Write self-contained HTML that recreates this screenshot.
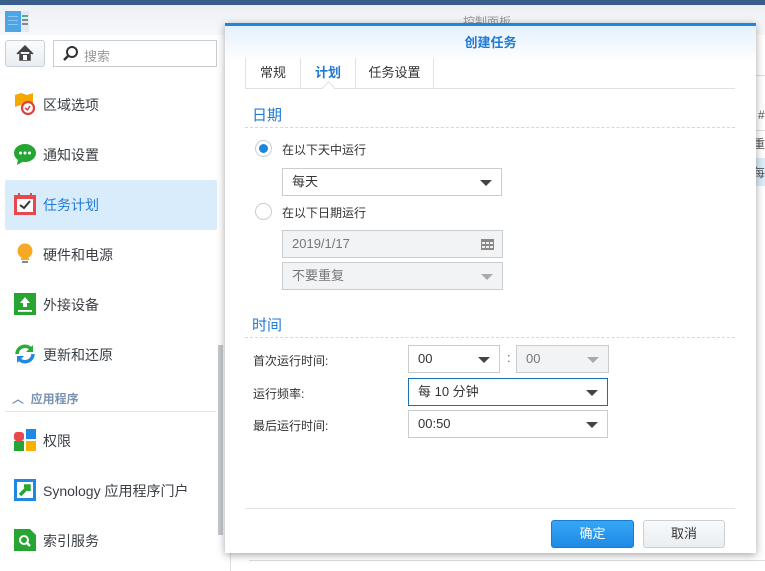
<!DOCTYPE html>
<html><head><meta charset="utf-8"><style>
*{box-sizing:border-box;margin:0;padding:0}
body{width:765px;height:571px;overflow:hidden;background:#fff;font-family:"Liberation Sans","Noto Sans CJK SC",sans-serif;font-size:13px;color:#333;position:relative}
.abs{position:absolute}
.topbar{left:0;top:0;width:765px;height:5px;background:#3a5e8c}
.hdr{left:0;top:5px;width:765px;height:30px;background:linear-gradient(#eef1f4,#f6f8fa)}
.side{left:0;top:35px;width:230px;height:536px;background:#fff}
.item{position:absolute;left:5px;width:212px;height:50px;font-size:14px;color:#3a3f45}
.item .ic{position:absolute;left:9px;top:13px;width:22px;height:22px}
.item span{position:absolute;left:38px;top:15px}
.sel{background:#d9ecfb}
.sel span{color:#1f7ad6}
.dlg{left:225px;top:23px;width:531px;height:530px;background:#fff;box-shadow:0 2px 8px rgba(0,0,0,.35);border-top:3px solid #1a87de}
.title{left:0;top:0;width:531px;height:36px;background:linear-gradient(#e4f1fb,#fff);text-align:center;line-height:34px;color:#1f7ad6;font-size:13px;font-weight:bold}
.tab{position:absolute;top:32px;height:30px;line-height:30px;font-size:13px;color:#333;text-align:center}
.field{position:absolute;height:28px;border:1px solid #c8cdd2;background:#fff;font-size:13px;line-height:26px;padding-left:9px}
.dis{background:#f2f3f5;color:#777}
.arr{position:absolute;right:9px;top:11px;width:0;height:0;border-left:6px solid transparent;border-right:6px solid transparent;border-top:6px solid #444}
.dis .arr{border-top-color:#aaa}
.sec{position:absolute;left:27px;color:#1f7ad6;font-size:15px}
.dash{position:absolute;left:20px;width:490px;border-top:1px dashed #d5d8db}
.lbl{position:absolute;left:28px;font-size:12px;color:#333}
.clip{position:absolute;left:753px;width:12px;overflow:hidden;white-space:nowrap;color:#555;font-size:12px}
</style></head><body>
<div class="abs topbar"></div>
<div class="abs hdr"><div class="abs" style="left:463px;top:8px;color:#999;font-size:12px">控制面板</div></div>
<svg class="abs" style="left:5px;top:11px" width="24" height="22"><rect width="16" height="21" fill="#4ea5e6"/><rect x="16" width="8" height="21" fill="#e3e9ef"/><rect x="17" y="4" width="6" height="2" fill="#5a9"/><rect x="17" y="8" width="6" height="2" fill="#888"/><rect x="17" y="12" width="6" height="2" fill="#888"/><rect x="3" y="5" width="10" height="1" fill="#8cc8f4"/><rect x="3" y="9" width="10" height="1" fill="#8cc8f4"/><rect x="3" y="13" width="10" height="1" fill="#8cc8f4"/></svg>
<div class="abs side"></div>
<div class="abs" style="left:5px;top:40px;width:40px;height:27px;border:1px solid #c9d0d8;border-radius:3px;background:linear-gradient(#fafbfc,#e9edf1)">
<svg width="40" height="27" style="position:absolute;left:-1px;top:-1px"><path d="M12 14 L20 6 L28 14 M15 12 V20 H25 V12" fill="#444" stroke="#444" stroke-width="1.5"/><rect x="18" y="15" width="4" height="5" fill="#fff"/></svg></div>
<div class="abs" style="left:53px;top:40px;width:164px;height:27px;border:1px solid #c9ced3;background:#fff">
<svg width="20" height="20" style="position:absolute;left:7px;top:3px"><circle cx="11" cy="8" r="5" stroke="#333" stroke-width="2" fill="none"/><path d="M7.5 11.5 L3 16" stroke="#333" stroke-width="2.5"/></svg>
<span style="position:absolute;left:30px;top:5px;color:#999;font-size:13px">搜索</span></div>

<div class="item" style="top:80px"><svg class="ic" viewBox="0 0 22 22"><path d="M1 2 L7 0 L13 2 L19 0 V12 L13 14 L7 12 L1 14Z" fill="#f5a800"/><circle cx="14" cy="15" r="6" fill="#fff" stroke="#e04040" stroke-width="2.2"/><path d="M11 15 L13.5 17 L16 13" stroke="#e04040" stroke-width="1.5" fill="none"/></svg><span>区域选项</span></div>
<div class="item" style="top:130px"><svg class="ic" viewBox="0 0 22 22"><ellipse cx="11" cy="10" rx="11" ry="9" fill="#27a533"/><path d="M4 16 L3 22 L10 18Z" fill="#27a533"/><circle cx="6.5" cy="10" r="1.5" fill="#fff"/><circle cx="11" cy="10" r="1.5" fill="#fff"/><circle cx="15.5" cy="10" r="1.5" fill="#fff"/></svg><span>通知设置</span></div>
<div class="item sel" style="top:180px;border-radius:2px"><svg class="ic" viewBox="0 0 22 22"><rect x="0" y="2" width="22" height="20" fill="#e8474c"/><rect x="3" y="6" width="16" height="13" fill="#fff"/><rect x="4" y="0" width="2" height="4" fill="#e8474c"/><rect x="16" y="0" width="2" height="4" fill="#e8474c"/><path d="M6 12 L10 15 L16 8" stroke="#333" stroke-width="2" fill="none"/></svg><span>任务计划</span></div>
<div class="item" style="top:230px"><svg class="ic" viewBox="0 0 22 22"><circle cx="11" cy="8" r="7.5" fill="#f9a825"/><rect x="7" y="15" width="8" height="2" fill="#f9a825"/><rect x="8" y="18" width="6" height="2" fill="#888"/></svg><span>硬件和电源</span></div>
<div class="item" style="top:280px"><svg class="ic" viewBox="0 0 22 22"><rect width="22" height="22" fill="#27a533"/><path d="M11 4 L16 10 H13 V14 H9 V10 H6Z" fill="#fff"/><rect x="4" y="17" width="14" height="1.8" fill="#fff"/></svg><span>外接设备</span></div>
<div class="item" style="top:330px"><svg class="ic" viewBox="0 0 22 22"><path d="M3 11 A8 8 0 0 1 17 6" stroke="#2dab3a" stroke-width="3.5" fill="none"/><path d="M19 2 V9 H12Z" fill="#2dab3a"/><path d="M19 11 A8 8 0 0 1 5 16" stroke="#1e88e5" stroke-width="3.5" fill="none"/><path d="M3 20 V13 H10Z" fill="#1e88e5"/></svg><span>更新和还原</span></div>
<div class="abs" style="left:12px;top:390px;color:#7a93b0;font-size:12px;font-weight:bold">︿&nbsp;&nbsp;应用程序</div>
<div class="abs" style="left:5px;top:411px;width:211px;border-top:1px solid #e3e6e9"></div>
<div class="item" style="top:416px"><svg class="ic" viewBox="0 0 22 22"><rect x="0" y="3" width="10" height="9" fill="#e8474c" rx="3"/><rect x="12" y="0" width="10" height="10" fill="#1e88e5"/><rect x="0" y="12" width="10" height="10" fill="#27a533"/><rect x="12" y="12" width="10" height="10" fill="#f9b000"/></svg><span>权限</span></div>
<div class="item" style="top:466px"><svg class="ic" viewBox="0 0 22 22"><rect width="22" height="22" fill="#1e88e5"/><rect x="3" y="3" width="16" height="16" fill="#fff"/><path d="M6 16 L13 9 M10 7 H15 V12" stroke="#27a533" stroke-width="3.5" fill="none"/></svg><span>Synology 应用程序门户</span></div>
<div class="item" style="top:516px"><svg class="ic" viewBox="0 0 22 22"><path d="M0 0 H16 L22 6 V22 H0Z" fill="#27a533"/><circle cx="10" cy="11" r="4" stroke="#fff" stroke-width="2" fill="none"/><path d="M13 14 L16 17" stroke="#fff" stroke-width="2.5"/></svg><span>索引服务</span></div>
<div class="abs" style="left:218px;top:345px;width:5px;height:190px;background:#c4c8cc"></div>
<div class="abs" style="left:230px;top:35px;width:1px;height:536px;background:#dcdfe2"></div>

<div class="abs" style="left:756px;top:75px;width:9px;height:1px;background:#ddd"></div>
<div class="clip" style="top:108px;left:758px">#</div>
<div class="abs" style="left:750px;top:130px;width:15px;height:1px;background:#ddd"></div>
<div class="clip" style="top:135px">重要</div>
<div class="abs" style="left:753px;top:158px;width:12px;height:28px;background:#dbecf9"></div>
<div class="clip" style="top:164px">每天</div>
<div class="abs" style="left:249px;top:560px;width:516px;border-top:1px solid #ddd"></div>

<div class="abs dlg">
<div class="abs title">创建任务</div>
<div class="tab" style="left:20px;width:55px;border-left:1px solid #e0e3e6">常规</div>
<div class="tab" style="left:75px;width:55px;color:#1f7ad6;font-weight:bold;border-left:1px solid #e0e3e6">计划</div>
<div class="tab" style="left:130px;width:79px;border-left:1px solid #e0e3e6;border-right:1px solid #e0e3e6">任务设置</div>
<div class="abs" style="left:20px;top:62px;width:490px;border-top:1px solid #dfe2e5"></div>
<div class="abs" style="left:99px;top:57px;width:9px;height:9px;background:#fff;border-left:1px solid #dfe2e5;border-top:1px solid #dfe2e5;transform:rotate(45deg)"></div>
<div class="sec" style="top:78px">日期</div>
<div class="dash" style="top:101px"></div>
<div class="abs" style="left:30px;top:114px;width:17px;height:17px;border-radius:50%;border:1px solid #c9ced3;background:#fff"><div style="position:absolute;left:3px;top:3px;width:9px;height:9px;border-radius:50%;background:#1a87de"></div></div>
<div class="abs" style="left:57px;top:115px;font-size:12px">在以下天中运行</div>
<div class="field" style="left:57px;top:142px;width:220px">每天<div class="arr"></div></div>
<div class="abs" style="left:30px;top:177px;width:17px;height:17px;border-radius:50%;border:1px solid #c9ced3;background:#fff"></div>
<div class="abs" style="left:57px;top:178px;font-size:12px">在以下日期运行</div>
<div class="field dis" style="left:57px;top:204px;width:221px">2019/1/17<svg width="13" height="11" style="position:absolute;right:8px;top:8px"><rect width="13" height="11" fill="#888"/><g fill="#eee"><rect x="1" y="3" width="3" height="2"/><rect x="5" y="3" width="3" height="2"/><rect x="9" y="3" width="3" height="2"/><rect x="1" y="7" width="3" height="2"/><rect x="5" y="7" width="3" height="2"/><rect x="9" y="7" width="3" height="2"/></g></svg></div>
<div class="field dis" style="left:57px;top:236px;width:221px">不要重复<div class="arr"></div></div>
<div class="sec" style="top:288px">时间</div>
<div class="dash" style="top:311px"></div>
<div class="lbl" style="top:326px">首次运行时间:</div>
<div class="field" style="left:183px;top:319px;width:92px">00<div class="arr"></div></div>
<div class="abs" style="left:282px;top:324px;color:#666">:</div>
<div class="field dis" style="left:291px;top:319px;width:93px">00<div class="arr"></div></div>
<div class="lbl" style="top:359px">运行频率:</div>
<div class="field" style="left:183px;top:352px;width:200px;border-color:#1a6fb6">每 10 分钟<div class="arr"></div></div>
<div class="lbl" style="top:391px">最后运行时间:</div>
<div class="field" style="left:183px;top:384px;width:200px">00:50<div class="arr"></div></div>
<div class="abs" style="left:20px;top:482px;width:490px;border-top:1px solid #dfe2e5"></div>
<div class="abs" style="left:326px;top:494px;width:83px;height:28px;border-radius:3px;background:linear-gradient(#35a6f5,#1f8ae6);border:1px solid #1a7ccc;color:#fff;text-align:center;line-height:26px">确定</div>
<div class="abs" style="left:418px;top:494px;width:82px;height:28px;border-radius:3px;background:linear-gradient(#f8fafb,#e9eef2);border:1px solid #c9d0d6;color:#333;text-align:center;line-height:26px">取消</div>
</div>
</body></html>
